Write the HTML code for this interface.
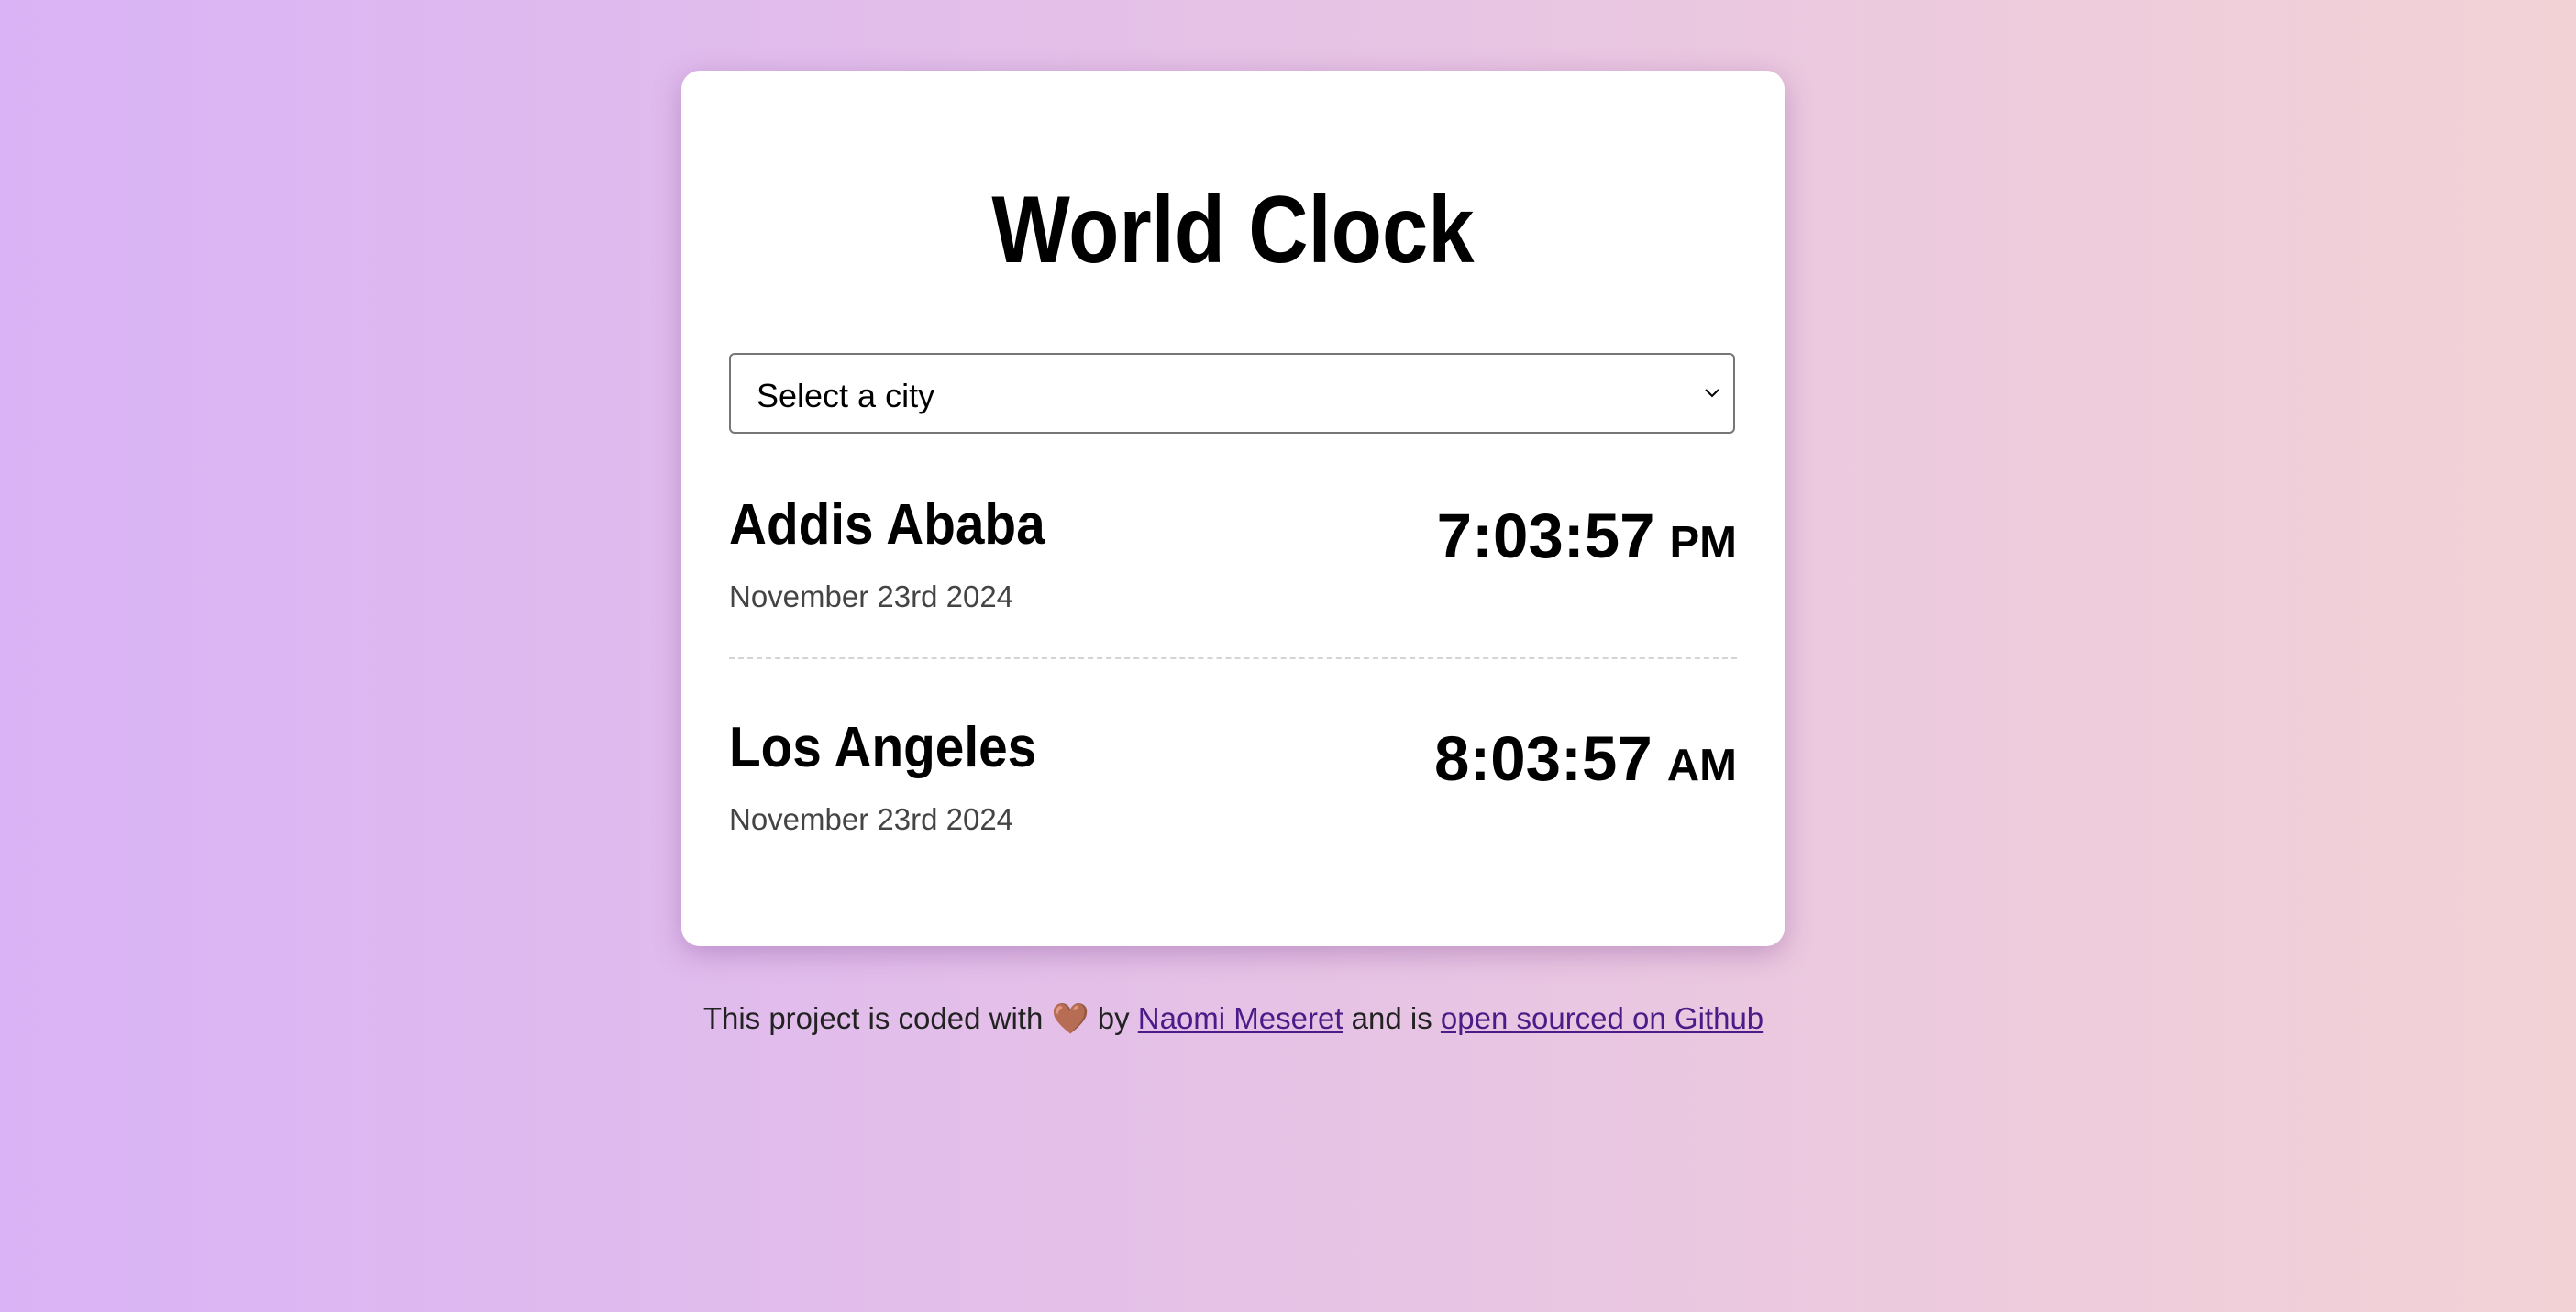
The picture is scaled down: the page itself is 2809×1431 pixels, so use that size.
<!DOCTYPE html>
<html><head><meta charset="utf-8"><style>
html,body{margin:0;padding:0;width:2809px;height:1431px;overflow:hidden}
body{background:linear-gradient(to right,#d9b3f5,#f3d2d6);font-family:"Liberation Sans",sans-serif;position:relative}
.card{position:absolute;left:743px;top:77px;width:1203px;height:955px;background:#fff;border-radius:20px;box-shadow:0 8px 30px rgba(120,60,140,.35)}
.a{position:absolute;white-space:nowrap;line-height:1}
h1{position:absolute;left:0;width:1203px;text-align:center;top:122px;margin:0;font-weight:bold;font-size:104px;line-height:1;color:#000;transform:scaleX(0.87);transform-origin:center}
.sel{position:absolute;left:52px;top:308px;width:1097px;height:88px;border:2px solid #767676;border-radius:6px;box-sizing:border-box;}
.sel span{position:absolute;left:28px;top:24px;font-size:36px;color:#000}
.sel svg{position:absolute;right:14px;top:36px}
.city{font-weight:bold;font-size:62px;color:#000;left:52px;transform:scaleX(0.915);transform-origin:left}
.date{font-size:33px;color:#444;left:52px}
.time{font-weight:bold;font-size:69px;color:#000;right:52px}
.time small{font-size:49px;margin-left:16px}
.hr{position:absolute;left:52px;width:1099px;top:640px;border-top:2px dashed #d4d4d4}
.foot{position:absolute;left:0;width:2690px;text-align:center;top:1092px;font-size:33px;color:#222;white-space:nowrap}
.foot a{color:#4b1b87;text-decoration:underline}
</style></head><body>
<div class="card">
<h1>World Clock</h1>
<div class="sel"><span>Select a city</span><svg width="18" height="12" viewBox="0 0 18 12"><path d="M2 2 L9 9 L16 2" fill="none" stroke="#000" stroke-width="2"/></svg></div>
<div class="a city" style="top:465px">Addis Ababa</div>
<div class="a date" style="top:557px">November 23rd 2024</div>
<div class="a time" style="top:473px">7:03:57<small>PM</small></div>
<div class="hr"></div>
<div class="a city" style="top:708px">Los Angeles</div>
<div class="a date" style="top:800px">November 23rd 2024</div>
<div class="a time" style="top:716px">8:03:57<small>AM</small></div>
</div>
<div class="foot">This project is coded with 🤎 by <a>Naomi Meseret</a> and is <a>open sourced on Github</a></div>
</body></html>
